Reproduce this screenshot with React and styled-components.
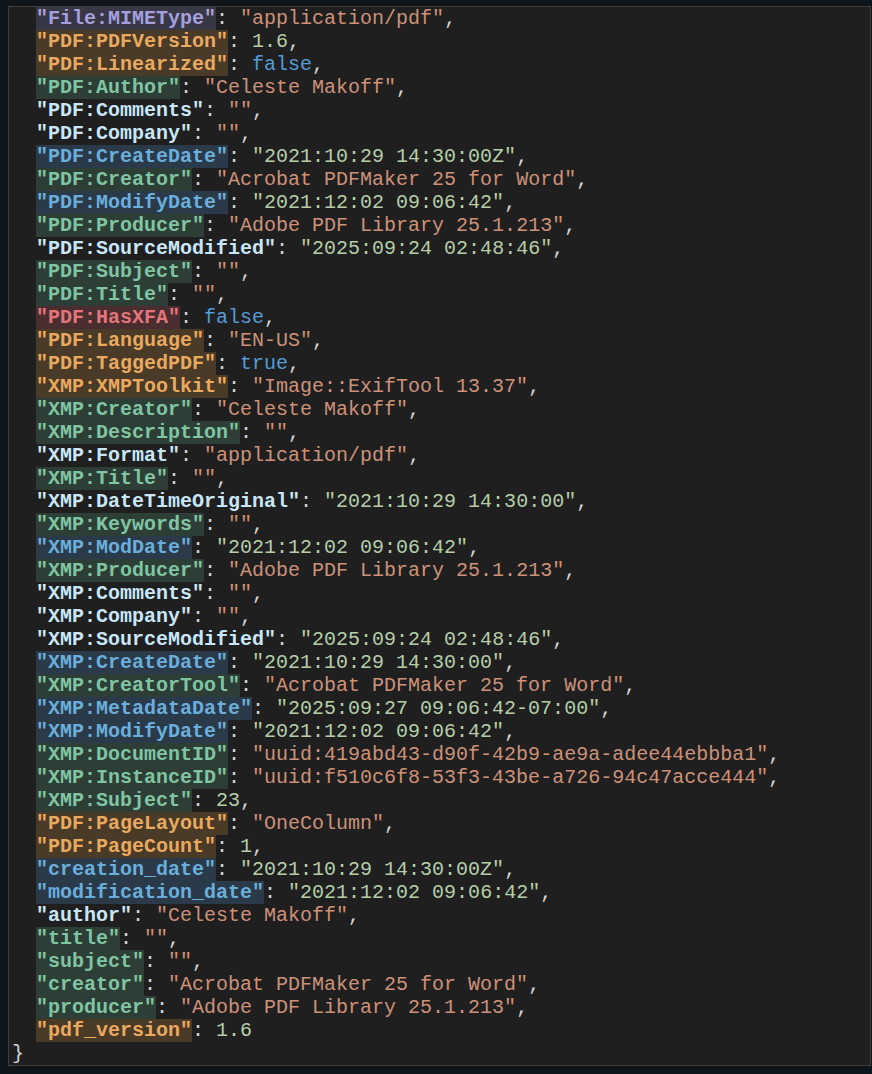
import React from 'react'
import styled, { createGlobalStyle } from 'styled-components'

const GlobalStyle = createGlobalStyle`
  html, body {
    margin: 0;
    padding: 0;
    background: #0e151b;
  }
  body {
    padding: 6px 1px 0 8px;
    height: 1074px;
    box-sizing: border-box;
    overflow: hidden;
  }
`

const tones = {
  plain: { bg: 'transparent', fg: '#c9e6f6' },
  purple: { bg: '#383746', fg: '#a5a0dc' },
  orange: { bg: '#4a3a28', fg: '#e9a95e' },
  green: { bg: '#2d3e37', fg: '#80c5a2' },
  blue: { bg: '#2a3a49', fg: '#6aaedc' },
  red: { bg: '#4a2d2f', fg: '#e2767a' },
}

const valueColors = {
  str: '#ce9178',
  date: '#b5cea8',
  num: '#b5cea8',
  bool: '#569cd6',
}

const Panel = styled.div`
  background: #1f1f1f;
  border: 1px solid #3d3d3d;
  padding: 0 0 0 3px;
  font-family: "Liberation Mono", "Courier New", monospace;
  font-size: 20px;
  color: #d4d4d4;
`

const Line = styled.div`
  height: 23px;
  line-height: 23px;
  white-space: pre;
  padding-left: ${p => (p.$indent ? '24px' : '0')};
`

const Key = styled.span`
  display: inline-block;
  height: 23px;
  font-weight: bold;
  background: ${p => tones[p.$tone].bg};
  color: ${p => tones[p.$tone].fg};
`

const Value = styled.span`
  color: ${p => valueColors[p.$kind]};
`

const rows = [
  ['File:MIMEType', 'str', 'application/pdf', 'purple'],
  ['PDF:PDFVersion', 'num', '1.6', 'orange'],
  ['PDF:Linearized', 'bool', 'false', 'orange'],
  ['PDF:Author', 'str', 'Celeste Makoff', 'green'],
  ['PDF:Comments', 'str', '', 'plain'],
  ['PDF:Company', 'str', '', 'plain'],
  ['PDF:CreateDate', 'date', '2021:10:29 14:30:00Z', 'blue'],
  ['PDF:Creator', 'str', 'Acrobat PDFMaker 25 for Word', 'green'],
  ['PDF:ModifyDate', 'date', '2021:12:02 09:06:42', 'blue'],
  ['PDF:Producer', 'str', 'Adobe PDF Library 25.1.213', 'green'],
  ['PDF:SourceModified', 'date', '2025:09:24 02:48:46', 'plain'],
  ['PDF:Subject', 'str', '', 'green'],
  ['PDF:Title', 'str', '', 'green'],
  ['PDF:HasXFA', 'bool', 'false', 'red'],
  ['PDF:Language', 'str', 'EN-US', 'orange'],
  ['PDF:TaggedPDF', 'bool', 'true', 'orange'],
  ['XMP:XMPToolkit', 'str', 'Image::ExifTool 13.37', 'orange'],
  ['XMP:Creator', 'str', 'Celeste Makoff', 'green'],
  ['XMP:Description', 'str', '', 'green'],
  ['XMP:Format', 'str', 'application/pdf', 'plain'],
  ['XMP:Title', 'str', '', 'green'],
  ['XMP:DateTimeOriginal', 'date', '2021:10:29 14:30:00', 'plain'],
  ['XMP:Keywords', 'str', '', 'green'],
  ['XMP:ModDate', 'date', '2021:12:02 09:06:42', 'blue'],
  ['XMP:Producer', 'str', 'Adobe PDF Library 25.1.213', 'green'],
  ['XMP:Comments', 'str', '', 'plain'],
  ['XMP:Company', 'str', '', 'plain'],
  ['XMP:SourceModified', 'date', '2025:09:24 02:48:46', 'plain'],
  ['XMP:CreateDate', 'date', '2021:10:29 14:30:00', 'blue'],
  ['XMP:CreatorTool', 'str', 'Acrobat PDFMaker 25 for Word', 'green'],
  ['XMP:MetadataDate', 'date', '2025:09:27 09:06:42-07:00', 'blue'],
  ['XMP:ModifyDate', 'date', '2021:12:02 09:06:42', 'blue'],
  ['XMP:DocumentID', 'str', 'uuid:419abd43-d90f-42b9-ae9a-adee44ebbba1', 'green'],
  ['XMP:InstanceID', 'str', 'uuid:f510c6f8-53f3-43be-a726-94c47acce444', 'green'],
  ['XMP:Subject', 'num', '23', 'green'],
  ['PDF:PageLayout', 'str', 'OneColumn', 'orange'],
  ['PDF:PageCount', 'num', '1', 'orange'],
  ['creation_date', 'date', '2021:10:29 14:30:00Z', 'blue'],
  ['modification_date', 'date', '2021:12:02 09:06:42', 'blue'],
  ['author', 'str', 'Celeste Makoff', 'plain'],
  ['title', 'str', '', 'green'],
  ['subject', 'str', '', 'green'],
  ['creator', 'str', 'Acrobat PDFMaker 25 for Word', 'green'],
  ['producer', 'str', 'Adobe PDF Library 25.1.213', 'green'],
  ['pdf_version', 'num', '1.6', 'orange'],
]

const App = () => {
  return (
    <>
      <GlobalStyle />
      <Panel>
        {rows.map(([key, kind, value, tone], i) => {
          const quoted = kind === 'str' || kind === 'date'
          const last = i === rows.length - 1
          return (
            <Line key={key} $indent>
              <Key $tone={tone}>"{key}"</Key>
              {': '}
              <Value $kind={kind}>{quoted ? `"${value}"` : value}</Value>
              {last ? '' : ','}
            </Line>
          )
        })}
        <Line>{'}'}</Line>
      </Panel>
    </>
  )
}

export default App
